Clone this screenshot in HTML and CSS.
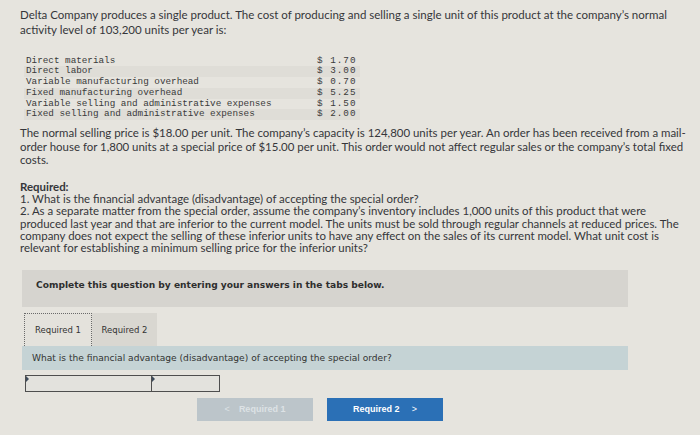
FILE: index.html
```html
<!DOCTYPE html>
<html>
<head>
<meta charset="utf-8">
<link rel="stylesheet" href="styles.css">
</head>
<body>
<div class="page">
  <p class="intro">Delta Company produces a single product. The cost of producing and selling a single unit of this product at the company’s normal<br>activity level of 103,200 units per year is:</p>
  <div class="costs">
    <div class="row"><span class="label">Direct materials</span><span class="val">$ 1.70</span></div>
    <div class="row alt"><span class="label">Direct labor</span><span class="val">$ 3.00</span></div>
    <div class="row"><span class="label">Variable manufacturing overhead</span><span class="val">$ 0.70</span></div>
    <div class="row alt"><span class="label">Fixed manufacturing overhead</span><span class="val">$ 5.25</span></div>
    <div class="row"><span class="label">Variable selling and administrative expenses</span><span class="val">$ 1.50</span></div>
    <div class="row alt"><span class="label">Fixed selling and administrative expenses</span><span class="val">$ 2.00</span></div>
  </div>
  <p class="para">The normal selling price is $18.00 per unit. The company’s capacity is 124,800 units per year. An order has been received from a mail-<br>order house for 1,800 units at a special price of $15.00 per unit. This order would not affect regular sales or the company’s total fixed<br>costs.</p>
  <div class="required">
    <p class="req-title">Required:</p>
    <p class="req-text">1. What is the financial advantage (disadvantage) of accepting the special order?<br>2. As a separate matter from the special order, assume the company’s inventory includes 1,000 units of this product that were<br>produced last year and that are inferior to the current model. The units must be sold through regular channels at reduced prices. The<br>company does not expect the selling of these inferior units to have any effect on the sales of its current model. What unit cost is<br>relevant for establishing a minimum selling price for the inferior units?</p>
  </div>
  <div class="panel">
    <div class="instruct">Complete this question by entering your answers in the tabs below.</div>
    <div class="tabs">
      <div class="tab active">Required 1</div>
      <div class="tab">Required 2</div>
    </div>
    <div class="question">What is the financial advantage (disadvantage) of accepting the special order?</div>
    <div class="inputs">
      <div class="cell wide"><span class="flag"></span></div>
      <div class="cell narrow"><span class="flag"></span></div>
    </div>
    <div class="nav">
      <div class="btn prev"><span class="chev">&lt;</span>Required 1</div>
      <div class="btn next">Required 2<span class="chev after">&gt;</span></div>
    </div>
  </div>
</div>
</body>
</html>
```
FILE: styles.css
```css
html, body {
  margin: 0;
  padding: 0;
}
body {
  background: #e6e4de;
  color: #35363a;
  font-family: Lato, "Open Sans", sans-serif;
  width: 700px;
  height: 435px;
  overflow: hidden;
}
.page {
  padding: 6.5px 0 0 20px;
}
p {
  margin: 0;
}
.intro {
  font-size: 11.5px;
  line-height: 15px;
  white-space: nowrap;
}
.costs {
  margin: 19px 0 0 4px;
  width: 336px;
  font-family: "Liberation Mono", "DejaVu Sans Mono", monospace;
  font-size: 9.3px;
  color: #3a3a3a;
}
.row {
  display: grid;
  grid-template-columns: 291px auto;
  height: 10.8px;
  line-height: 10.8px;
  padding-left: 2px;
}
.row.alt {
  background: #dfddd7;
}
.val {
  letter-spacing: 1px;
}
.para {
  margin-top: 6px;
  font-size: 11.45px;
  line-height: 13.5px;
  white-space: nowrap;
}
.required {
  margin-top: 14px;
  font-size: 11.45px;
  line-height: 12.3px;
  white-space: nowrap;
}
.req-title {
  font-weight: bold;
}
.panel {
  margin: 15.5px 0 0 2px;
  width: 606px;
  font-family: "DejaVu Sans", Verdana, sans-serif;
}
.instruct {
  background: #d6d4cf;
  height: 37px;
  box-sizing: border-box;
  padding: 9.5px 0 0 14px;
  font-size: 9.1px;
  font-weight: bold;
  color: #2e2e2e;
}
.tabs {
  display: flex;
  margin: 6px 0 0 2px;
}
.tab {
  height: 33px;
  box-sizing: border-box;
  padding: 11.5px 0 0 0;
  font-size: 8.5px;
  color: #333;
  text-align: center;
  background: #d9d7d1;
  width: 65px;
}
.tab.active {
  width: 68px;
  background: #e4e2dc;
  border: 1px dotted #6a6a6a;
  border-bottom: none;
  padding-top: 10.5px;
}
.question {
  background: #c5d3d5;
  height: 24px;
  box-sizing: border-box;
  padding: 6.5px 0 0 10px;
  font-size: 9.1px;
  color: #333;
}
.inputs {
  display: flex;
  margin: 5px 0 0 3px;
  border: 1px solid #4e4e4e;
  width: 195px;
  height: 17px;
  box-sizing: border-box;
}
.cell {
  position: relative;
  background: #e3e2dd;
}
.cell.wide {
  width: 125px;
  border-right: 1.5px solid #4e4e4e;
}
.cell.narrow {
  flex: 1;
}
.flag {
  position: absolute;
  left: 0;
  top: 0;
  width: 0;
  height: 0;
  border-top: 3px solid transparent;
  border-bottom: 3px solid transparent;
  border-left: 3px solid #3d4a5a;
}
.nav {
  display: flex;
  margin: 6px 0 0 175px;
  gap: 14px;
}
.btn {
  height: 23px;
  width: 116px;
  box-sizing: border-box;
  padding-top: 6px;
  text-align: center;
  font-size: 9px;
  font-weight: bold;
  font-family: "Liberation Sans", Arial, sans-serif;
}
.chev {
  font-weight: normal;
  margin-right: 9px;
}
.chev.after {
  margin: 0 0 0 12px;
}
.btn.prev {
  background: #bcc5ca;
  color: #dde2e5;
}
.btn.next {
  background: #2b70b6;
  color: #ffffff;
}
```
